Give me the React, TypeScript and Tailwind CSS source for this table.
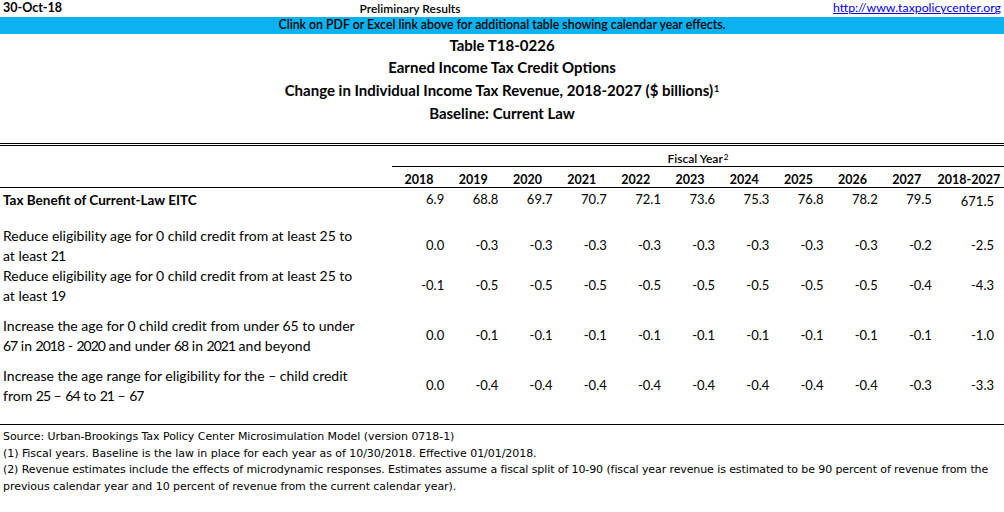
const years = ["2018", "2019", "2020", "2021", "2022", "2023", "2024", "2025", "2026", "2027"];

const rows = [
  {
    label: ["Reduce eligibility age for 0 child credit from at least 25 to", "at least 21"],
    values: ["0.0", "-0.3", "-0.3", "-0.3", "-0.3", "-0.3", "-0.3", "-0.3", "-0.3", "-0.2", "-2.5"],
  },
  {
    label: ["Reduce eligibility age for 0 child credit from at least 25 to", "at least 19"],
    values: ["-0.1", "-0.5", "-0.5", "-0.5", "-0.5", "-0.5", "-0.5", "-0.5", "-0.5", "-0.4", "-4.3"],
  },
  {
    label: ["Increase the age for 0 child credit from under 65 to under", "67 in 2018 - 2020 and under 68 in 2021 and beyond"],
    values: ["0.0", "-0.1", "-0.1", "-0.1", "-0.1", "-0.1", "-0.1", "-0.1", "-0.1", "-0.1", "-1.0"],
  },
  {
    label: ["Increase the age range for eligibility for the \u2013 child credit", "from 25 \u2013 64 to 21 \u2013 67"],
    values: ["0.0", "-0.4", "-0.4", "-0.4", "-0.4", "-0.4", "-0.4", "-0.4", "-0.4", "-0.3", "-3.3"],
  },
];

const benefit = ["6.9", "68.8", "69.7", "70.7", "72.1", "73.6", "75.3", "76.8", "78.2", "79.5", "671.5"];

const grid = "grid grid-cols-[392px_repeat(10,54.2px)_1fr]";

// Lato's figures run wider than the sheet's; tighten digit runs a little
function Narrow({ text }: { text: string }) {
  return (
    <>
      {text.split(/(\d+)/).map((part, i) =>
        /^\d+$/.test(part) ? (
          <span key={i} className="tracking-[-1px]">
            {part}
          </span>
        ) : (
          part
        )
      )}
    </>
  );
}

export default function App() {
  return (
    <div className="w-[1004px] h-[512px] bg-white text-black font-['Lato',sans-serif] overflow-hidden">
      {/* Top line */}
      <div className="h-[17px] grid grid-cols-[335px_150px_1fr] items-center text-[12.5px] leading-none">
        <span className="pl-[3px] font-bold">30-Oct-18</span>
        <span className="font-semibold text-center text-[12px]">Preliminary Results</span>
        <a className="text-right pr-[3px] text-[#0000ee] underline text-[12.3px]" href="#">
          http://www.taxpolicycenter.org
        </a>
      </div>

      {/* Notice bar */}
      <div className="h-[17px] bg-[#0bb2ef] flex items-center justify-center text-[12.3px] font-semibold leading-none">
        Clink on PDF or Excel link above for additional table showing calendar year effects.
      </div>

      {/* Titles */}
      <div className="flex flex-col items-center font-bold text-[15px] leading-[22px]">
        <div>Table T18-0226</div>
        <div>Earned Income Tax Credit Options</div>
        <div className="h-[24px] leading-[24px]">
          Change in Individual Income Tax Revenue, 2018-2027 ($ billions)
          <sup className="text-[9px] relative -top-[4px] ml-[1px]">1</sup>
        </div>
        <div>Baseline: Current Law</div>
      </div>

      {/* Double rule */}
      <div className="mt-[19px] h-[3px] border-y border-black" />

      {/* Column header */}
      <div className={`${grid} mt-[1px]`}>
        <div />
        <div className="col-span-11 border-b border-black text-center text-[12px] font-semibold leading-[20px] h-[20px] pt-[2px]">
          Fiscal Year<sup className="text-[8px] relative -top-[3px] ml-[1px]">2</sup>
        </div>
      </div>
      <div className={`${grid} border-b border-black h-[21px] pt-[5px] leading-[15px] text-[12.5px] font-bold`}>
        <div />
        {years.map((y) => (
          <div key={y} className="text-center">
            {y}
          </div>
        ))}
        <div className="text-center">2018-2027</div>
      </div>

      {/* Body */}
      <div className={`${grid} h-[23px] items-center text-[13px]`}>
        <div className="pl-[3px] font-bold text-[13.5px]">Tax Benefit of Current-Law EITC</div>
        {benefit.map((v, i) => (
          <div key={i} className={i === 10 ? "text-right pr-[10px] pt-[4px]" : "text-right pr-[2px]"}>
            {v}
          </div>
        ))}
      </div>

      <div className="mt-[15px]">
        {rows.map((r, ri) => (
          <div key={ri} className={`${grid} items-center text-[13px] ${ri >= 2 ? "mt-[10px]" : ""}`}>
            <div className="pl-[3px] text-[14px] leading-[20px] whitespace-nowrap">
              {r.label[0]}
              <br />
              <Narrow text={r.label[1]} />
            </div>
            {r.values.map((v, i) => (
              <div key={i} className={i === 10 ? "text-right pr-[10px]" : "text-right pr-[2px]"}>
                {v}
              </div>
            ))}
          </div>
        ))}
      </div>

      {/* Bottom rule and notes */}
      <div className="mt-[18px] border-t border-black pt-[4px] pl-[3px] font-['DejaVu_Sans',sans-serif] text-[11px] leading-[16.5px] tracking-[-0.05px]">
        <div>Source: Urban-Brookings Tax Policy Center Microsimulation Model (version 0718-1)</div>
        <div>(1) Fiscal years. Baseline is the law in place for each year as of 10/30/2018. Effective 01/01/2018.</div>
        <div className="whitespace-nowrap tracking-[-0.1px]">
          (2) Revenue estimates include the effects of microdynamic responses. Estimates assume a fiscal split of 10-90 (fiscal year revenue is estimated to be 90 percent of revenue from the
        </div>
        <div>previous calendar year and 10 percent of revenue from the current calendar year).</div>
      </div>
    </div>
  );
}
